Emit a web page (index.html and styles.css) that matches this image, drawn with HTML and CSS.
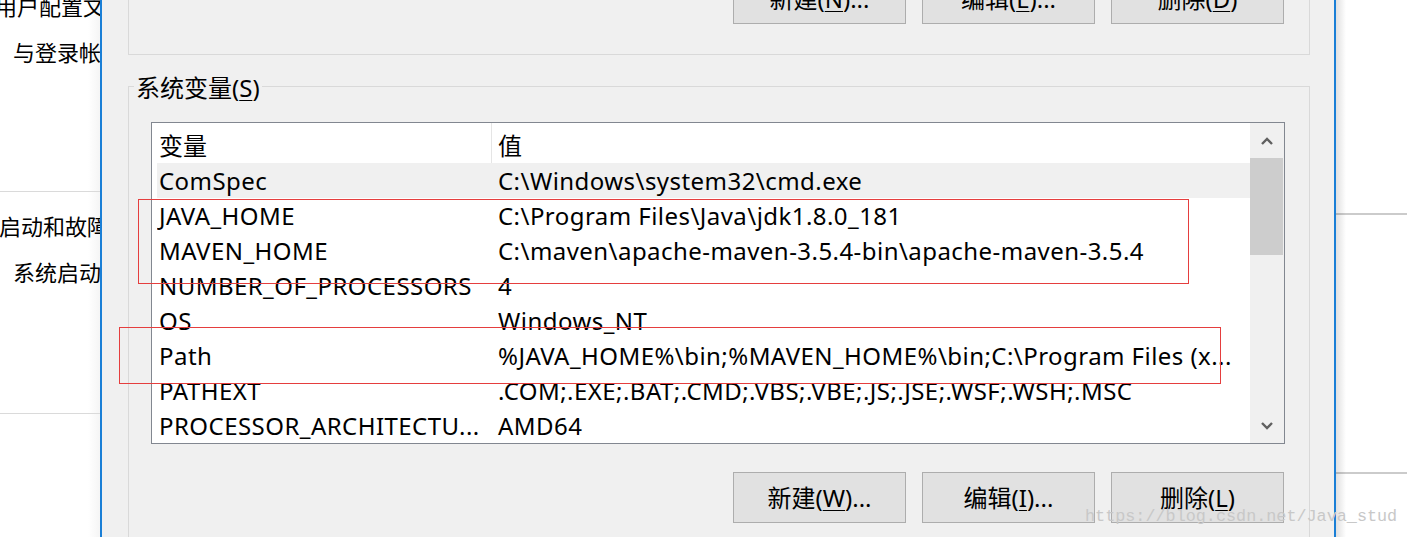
FILE: index.html
```html
<!DOCTYPE html>
<html lang="zh-CN">
<head>
<meta charset="utf-8">
<title>系统变量</title>
<link rel="stylesheet" href="styles.css">
</head>
<body>
<div class="screen">
  <aside class="side">
    <div class="side-t t1">用户配置文件</div>
    <div class="side-t t2">与登录帐户相关的桌面设置</div>
    <div class="rule"></div>
    <div class="side-t t3">启动和故障恢复</div>
    <div class="side-t t4">系统启动、系统故障和调试信息</div>
    <div class="rule r2"></div>
  </aside>

  <section class="dialog">
    <div class="group group-user">
      <div class="btn-row">
        <button class="btn">新建(<u>N</u>)...</button>
        <button class="btn">编辑(<u>E</u>)...</button>
        <button class="btn">删除(<u>D</u>)</button>
      </div>
    </div>

    <div class="group group-sys">
      <div class="group-label">系统变量(<u>S</u>)</div>
      <div class="listview">
        <div class="list-body">
          <div class="lv-row lv-head"><div class="c-name">变量</div><div class="c-val">值</div></div>
          <div class="lv-row lv-sel"><div class="c-name">ComSpec</div><div class="c-val">C:\Windows\system32\cmd.exe</div></div>
          <div class="lv-row"><div class="c-name">JAVA_HOME</div><div class="c-val">C:\Program Files\Java\jdk1.8.0_181</div></div>
          <div class="lv-row"><div class="c-name">MAVEN_HOME</div><div class="c-val">C:\maven\apache-maven-3.5.4-bin\apache-maven-3.5.4</div></div>
          <div class="lv-row"><div class="c-name">NUMBER_OF_PROCESSORS</div><div class="c-val">4</div></div>
          <div class="lv-row"><div class="c-name">OS</div><div class="c-val">Windows_NT</div></div>
          <div class="lv-row"><div class="c-name">Path</div><div class="c-val">%JAVA_HOME%\bin;%MAVEN_HOME%\bin;C:\Program Files (x...</div></div>
          <div class="lv-row"><div class="c-name">PATHEXT</div><div class="c-val">.COM;.EXE;.BAT;.CMD;.VBS;.VBE;.JS;.JSE;.WSF;.WSH;.MSC</div></div>
          <div class="lv-row"><div class="c-name">PROCESSOR_ARCHITECTU...</div><div class="c-val">AMD64</div></div>
        </div>
        <div class="scrollbar">
          <div class="sb-btn">
            <svg width="12" height="8" viewBox="0 0 12 8"><polyline points="1,7 6,2 11,7" fill="none" stroke="#606060" stroke-width="2.4"/></svg>
          </div>
          <div class="sb-track"><div class="sb-thumb"></div></div>
          <div class="sb-btn">
            <svg width="12" height="8" viewBox="0 0 12 8"><polyline points="1,1 6,6 11,1" fill="none" stroke="#606060" stroke-width="2.4"/></svg>
          </div>
        </div>
      </div>
      <div class="btn-row btn-row-bottom">
        <button class="btn">新建(<u>W</u>)...</button>
        <button class="btn">编辑(<u>I</u>)...</button>
        <button class="btn">删除(<u>L</u>)</button>
      </div>
    </div>
  </section>

  <aside class="side-right">
    <div class="rule rr1"></div>
    <div class="rule rr2"></div>
  </aside>
</div>

<div class="mark mark-1"></div>
<div class="mark mark-2"></div>
<div class="watermark">https://blog.csdn.net/Java_stud</div>
</body>
</html>
```
FILE: styles.css
```css
* { box-sizing: border-box; }

body {
  margin: 0;
  width: 1407px;
  height: 537px;
  overflow: hidden;
  position: relative;
  background: #fff;
  color: #000;
  font-family: "Noto Sans", "Noto Sans CJK SC", sans-serif;
}

.screen {
  display: flex;
  height: 537px;
}

/* left background window */
.side {
  width: 100px;
  flex: none;
  overflow: hidden;
  background: linear-gradient(to right, #fff 88%, #f5f5f5);
}

.side-t {
  font-family: "Noto Sans CJK SC", sans-serif;
  font-size: 22px;
  line-height: 30px;
  white-space: nowrap;
}

.t1 { margin: -10px 0 0 -5px; }
.t2 { margin: 16px 0 0 13px; }
.t3 { margin: 18px 0 0 -1px; }
.t4 { margin: 16px 0 0 13px; }

.rule {
  height: 1px;
  background: #dadada;
  margin-top: 125px;
}
.side .r2 { margin-top: 127px; }

/* dialog */
.dialog {
  width: 1236px;
  flex: none;
  height: 537px;
  overflow: hidden;
  background: #f0f0f0;
  border-left: 2px solid #1a7fd6;
  border-right: 2px solid #1a7fd6;
}

.group {
  margin: 0 24px 0 26px;
  border: 1px solid #d9d9d9;
}

.group-user {
  margin-top: -60px;
  padding: 32px 25px 30px 0;
}

.group-sys {
  margin-top: 31px;
  padding: 0 24px 20px 22px;
}

.group-label {
  width: max-content;
  margin: -14px 0 0 -17px;
  padding: 0 2px;
  background: #f0f0f0;
  font-family: "Noto Sans", "Noto Sans CJK SC", sans-serif;
  font-size: 24px;
  line-height: 30px;
}

u { text-underline-offset: 3px; text-decoration-thickness: 1px; }

.btn-row {
  display: flex;
  justify-content: flex-end;
  gap: 16px;
}

.btn-row-bottom {
  margin-top: 28px;
  margin-right: 1px;
}

.btn {
  width: 173px;
  height: 51px;
  padding: 0;
  border: 1px solid #adadad;
  background: #e1e1e1;
  color: #000;
  font-family: "Noto Sans", "Noto Sans CJK SC", sans-serif;
  font-size: 24px;
  line-height: 30px;
}

/* list view */
.listview {
  margin-top: 19px;
  height: 322px;
  border: 1px solid #828790;
  background: #fff;
  display: flex;
}

.list-body {
  flex: 1;
  overflow: hidden;
}

.lv-row {
  display: grid;
  grid-template-columns: 334px 1fr;
  margin-left: 5px;
  height: 35px;
  font-size: 24px;
  letter-spacing: 0.45px;
  line-height: 36px;
  white-space: nowrap;
}

.c-name { padding-left: 2px; overflow: hidden; }
.c-val { padding-left: 7px; overflow: hidden; }

.lv-head {
  height: 40px;
  font-family: "Noto Sans CJK SC", sans-serif;
  font-size: 24px;
  letter-spacing: 0;
}
.lv-head .c-name,
.lv-head .c-val {
  padding-top: 4px;
  line-height: 36px;
}
.lv-head .c-val {
  padding-left: 6px;
  border-left: 1px solid #e5e5e5;
}

.lv-sel { background: #f0f0f0; }

.scrollbar {
  width: 34px;
  flex: none;
  display: flex;
  flex-direction: column;
  background: #f0f0f0;
}

.sb-btn {
  height: 35px;
  display: flex;
  align-items: center;
  justify-content: center;
}

.sb-track { flex: 1; }

.sb-thumb {
  height: 97px;
  margin-right: 1px;
  background: #cdcdcd;
}

/* right background window */
.side-right {
  flex: 1;
  background: #fff;
  position: relative;
}
.side-right .rr1 { margin-top: 213px; height: 2px; background: #cbcbcb; }
.side-right .rr2 { margin-top: 257px; height: 2px; background: #cbcbcb; }
.side-right::before {
  content: "";
  position: absolute;
  left: 0; top: 0; bottom: 0;
  width: 10px;
  background: linear-gradient(to right, rgba(0,0,0,0.12), rgba(0,0,0,0));
}

/* annotations over content */
.mark {
  position: absolute;
  border: 1px solid #e53e3e;
  pointer-events: none;
}
.mark-1 { left: 138px; top: 199px; width: 1051px; height: 85px; }
.mark-2 { left: 119px; top: 327px; width: 1102px; height: 57px; }

.watermark {
  position: absolute;
  left: 1085px;
  top: 506px;
  font-family: "Liberation Mono", monospace;
  font-size: 16.8px;
  line-height: 22px;
  color: #c8c8c8;
  white-space: nowrap;
}
```
